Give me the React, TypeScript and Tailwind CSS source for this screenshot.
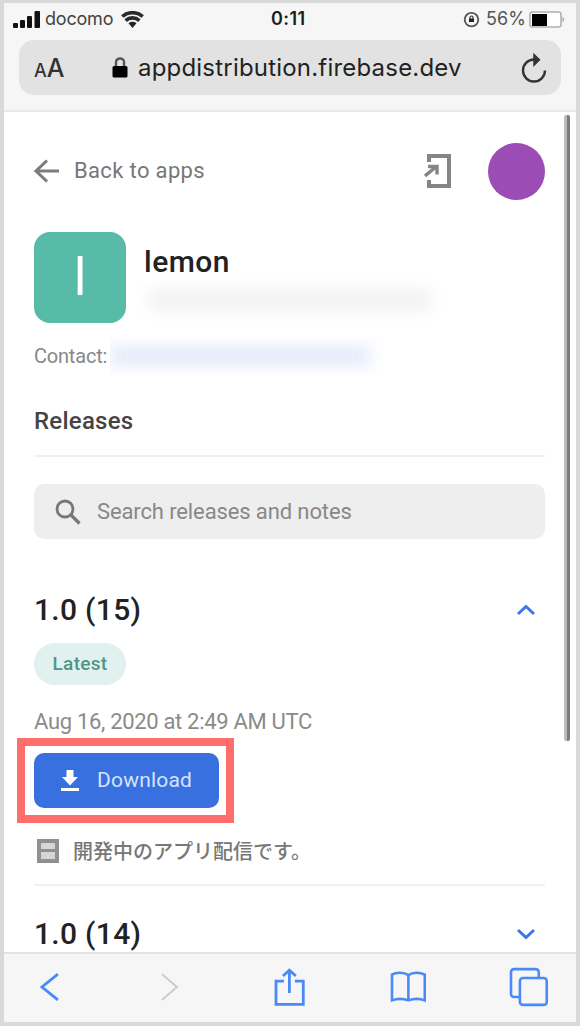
import { useState } from "react";
import type { ReactNode } from "react";

const ROBOTO = "font-['Roboto',sans-serif]";
const INTER = "font-['Inter',sans-serif]";

function StatusBar() {
  return (
    <div className={`relative flex h-[32px] items-center justify-between pl-[9px] pr-[11px] ${INTER}`}>
      <div className="flex items-center">
        <svg width="28" height="17" viewBox="0 0 28 17" className="text-[#111]" fill="currentColor">
          <rect x="0" y="12" width="5" height="5" rx="1" />
          <rect x="7" y="9" width="5" height="8" rx="1" />
          <rect x="14" y="5" width="5" height="12" rx="1" />
          <rect x="21.5" y="0" width="5.5" height="17" rx="1" />
        </svg>
        <span className="ml-[4px] w-[70px] whitespace-nowrap text-[18px] leading-none tracking-[-0.2px] text-[#444]">docomo</span>
        <svg width="23" height="17" viewBox="0 0 23 17" className="ml-[6px]" fill="none" stroke="#2a2a2a" strokeWidth="3.6">
          <path d="M1.3 5.5C7 .4 16 .4 21.700 5.500" />
          <path d="M4.600 9.600c4-3.600 9.800-3.600 13.800 0" />
          <path d="M7.500 12.300c2.200-2 5.800-2 8 0L11.500 17z" fill="#222" stroke="none" />
        </svg>
      </div>
      <span className="absolute left-[267px] text-[18px] font-semibold leading-none tracking-[0.4px] text-[#1c1c1c]">0:11</span>
      <div className="flex items-center">
        <svg width="17" height="17" viewBox="0 0 17 17" fill="none" stroke="#555" strokeWidth="1.8">
          <path d="M4 3.5A6.8 6.8 0 1 0 13 3.5M4 3.5C6.5 1.4 10.5 1.4 13 3.5" />
          <path d="M6 11V7.5h5V11z" fill="#222" stroke="none" />
          <path d="M7 8V6.5a1.5 1.5 0 0 1 3 0V8" stroke="#333" strokeWidth="1.2" />
        </svg>
        <span className="ml-[6px] w-[41px] whitespace-nowrap text-[18px] leading-none tracking-[0.1px] text-[#555]">56%</span>
        <svg width="36" height="17" viewBox="0 0 36 17" className="ml-[2px]">
          <rect x="1" y="1" width="31" height="15" rx="2.5" fill="#fff" stroke="#b0b0b0" strokeWidth="1.6" />
          <rect x="3" y="3" width="15" height="12" fill="#000" />
          <path d="M33.5 5.500c2 1 2 5 0 6z" fill="#aaa" />
        </svg>
      </div>
    </div>
  );
}

function AddressBar() {
  return (
    <div className={`mx-[15px] mt-[5px] flex h-[55px] items-center rounded-[15px] bg-[#e2e2e2] text-[#222] ${INTER}`}>
      <div className="ml-[15px] mt-[2px] flex w-[32px] items-baseline font-medium leading-none text-[#333]">
        <span className="text-[18px]">A</span>
        <span className="text-[25px]">A</span>
      </div>
      <svg width="16" height="21" viewBox="0 0 16 21" className="ml-[46px]">
        <path d="M4 10V5a4 3.500 0 0 1 8 0v5" fill="none" stroke="#555" strokeWidth="2.4" />
        <rect x="0.5" y="9" width="15" height="11.5" rx="1.5" fill="#000" />
      </svg>
      <span className="ml-[10px] w-[326px] whitespace-nowrap text-[24px] leading-none tracking-[0.2px]">appdistribution.firebase.dev</span>
      <svg width="26" height="30" viewBox="0 0 26 30" className="ml-[57px]" fill="none" stroke="#333" strokeWidth="2.4">
        <path d="M13 6.500A11 11 0 1 0 24 17.500" />
        <path d="M13 1.500l5.500 5.300-5.500 5.500z" fill="#333" strokeWidth="1.500" />
      </svg>
    </div>
  );
}

function Release({ name, open, onToggle, children }: { name: string; open: boolean; onToggle: () => void; children?: ReactNode }) {
  return (
    <section>
      <button onClick={onToggle} className="flex h-[40px] w-full items-center justify-between">
        <span className="text-[30px] font-medium leading-none tracking-[0.3px] text-[#222]">{name}</span>
        <svg width="20" height="12" viewBox="0 0 20 12" className="mr-[9px]" fill="none" stroke="#3b78e7" strokeWidth="3">
          <path d={open ? "M2 10l8-7.5L18 10" : "M2 2l8 7.5L18 2"} />
        </svg>
      </button>
      {open && children}
    </section>
  );
}

function TabBar() {
  return (
    <nav className="h-[70px] shrink-0 border-t-2 border-[#e3e3e3] bg-[#f6f6f6]">
      <div className="flex h-[66px] items-center pl-[36px] pr-[27px] text-[#4a8af8]">
        <svg width="20" height="28" viewBox="0 0 20 28" fill="none" stroke="currentColor" strokeWidth="2.8">
          <path d="M18 1L2 14l16 13" />
        </svg>
        <svg width="18" height="28" viewBox="0 0 18 28" className="ml-[101px]" fill="none" stroke="#ccc" strokeWidth="2">
          <path d="M1 1l15 13L1 27" />
        </svg>
        <svg width="31" height="39" viewBox="0 0 31 39" className="ml-[95px]" fill="none" stroke="currentColor" strokeWidth="2.8">
          <path d="M10 13H2v23.500h27.500V13H21M15.500 25V2M9 8l6.500-6L22 8" />
        </svg>
        <svg width="37" height="32" viewBox="0 0 37 32" className="ml-[85px]" fill="none" stroke="currentColor" strokeWidth="2.6">
          <path d="M18.500 4C14 1 6 1 2 3.500v26c5-2 11-2 16.500 0 5.500-2 11.500-2 16.500 0v-26C30 1 23 1 18.500 4zv25.500" />
        </svg>
        <svg width="40" height="40" viewBox="0 0 40 40" className="ml-[83px]" fill="none" stroke="currentColor" strokeWidth="2.600">
          <rect x="11" y="11" width="27" height="27" rx="3" />
          <path d="M11 30H5a3 3 0 0 1-3-3V5a3 3 0 0 1 3-3h22a3 3 0 0 1 3 3v6" />
        </svg>
      </div>
    </nav>
  );
}

export default function App() {
  const [openRelease, setOpenRelease] = useState("1.0 (15)");
  const toggle = (name: string) => setOpenRelease(openRelease === name ? "" : name);

  return (
    <div className="flex h-[1026px] w-[580px] flex-col overflow-hidden border-b-[4px] border-l-[4px] border-r-[4px] border-t-[3px] border-[#d9d9d9] bg-white">
      <header className="h-[109px] shrink-0 border-b-2 border-[#e8e8e8] bg-[#f6f6f6]">
        <StatusBar />
        <AddressBar />
      </header>

      <main className={`relative min-h-0 flex-1 overflow-hidden pl-[30px] pr-[31px] ${ROBOTO}`}>
        <div className="absolute right-[6px] top-[3px] h-[626px] w-[6px] rounded-[2px] border-l-[3px] border-[#bdbdbd] bg-[#7b7b7b]" />

        <div className="mt-[31px] flex h-[56px] items-center">
          <svg width="25" height="24" viewBox="0 0 25 24" fill="none" stroke="#7c7c7c" strokeWidth="3">
            <path d="M25 12H2M13 1.500L2 12l11 10.500" />
          </svg>
          <span className="ml-[15px] whitespace-nowrap text-[22px] leading-none tracking-[0.35px] text-[#777]">Back to apps</span>
          <svg width="28" height="36" viewBox="0 0 28 36" className="ml-auto mr-[36px]" fill="none" stroke="#858585" strokeWidth="4">
            <path d="M5 9V3h20v30H5v-6" />
            <path d="M1 23L13 13M4 13.500h9v8" strokeWidth="3.400" />
          </svg>
          <div className="h-[57px] w-[57px] rounded-full bg-[#9c4db5]" />
        </div>

        <div className="mt-[33px] flex h-[91px]">
          <div className="flex w-[92px] items-center justify-center rounded-[16px] bg-[#57bba7] text-[52px] leading-none text-white">l</div>
          <div className="ml-[18px]">
            <h1 className="mt-[14px] text-[30px] font-medium leading-[32px] tracking-[0.5px] text-[#222]">lemon</h1>
            <div className="ml-[4px] mt-[12px] h-[20px] w-[284px] rounded-full bg-[#f0f0f0] blur-[8px]" />
          </div>
        </div>

        <div className="mt-[14px] flex h-[37px] items-center">
          <span className="w-[76px] whitespace-nowrap text-[20px] leading-none tracking-[-0.2px] text-[#888]">Contact:</span>
          <div className="flex h-full w-[280px] items-center overflow-hidden">
            <div className="h-[20px] w-[260px] bg-[#e2eafa] blur-[8px]" />
          </div>
        </div>

        <h2 className="mt-[34px] text-[24px] font-medium leading-[26px] tracking-[0.25px] text-[#444]">Releases</h2>
        <div className="mt-[21px] h-[2px] bg-[#f1f1f1]" />

        <div className="mt-[27px] flex h-[55px] items-center rounded-[10px] bg-[#eeeeee]">
          <svg width="26" height="26" viewBox="0 0 26 26" className="ml-[21px]" fill="none" stroke="#777">
            <circle cx="10" cy="10" r="8" strokeWidth="2.800" />
            <path d="M16 16l8.500 8.500" strokeWidth="3.200" />
          </svg>
          <input
            placeholder="Search releases and notes"
            className="ml-[16px] w-[400px] bg-transparent text-[22px] tracking-[-0.120px] outline-none placeholder:text-[#888]"
          />
        </div>

        <div className="mt-[51px]">
          <Release name="1.0 (15)" open={openRelease === "1.0 (15)"} onToggle={() => toggle("1.0 (15)")}>
            <div className="mt-[13px] flex h-[42px] w-[92px] items-center justify-center rounded-full bg-[#e1f1ef] text-[19px] font-medium tracking-[0.3px] text-[#4f9688]">
              Latest
            </div>
            <div className="mt-[25px] whitespace-nowrap text-[22px] leading-[24px] tracking-[-0.320px] text-[#8a8a8a]">Aug 16, 2020 at 2:49 AM UTC</div>
            <div className="relative mt-[19px] h-[55px] w-[185px]">
              <button className="flex h-full w-full items-center rounded-[10px] bg-[#3870df] text-[#d5e3ff]">
                <svg width="18" height="21" viewBox="0 0 18 21" className="ml-[27px]" fill="#fff">
                  <path d="M5.500 0h7v7h4.500l-8 8.500L1 7h4.500zM0 18h18v3H0z" />
                </svg>
                <span className="ml-[18px] text-[21px] leading-none tracking-[0.200px]">Download</span>
              </button>
              <div className="pointer-events-none absolute -left-[17px] -top-[15px] h-[85px] w-[217px] border-8 border-[#ff6e6c]" />
            </div>
            <div className="mt-[31px] flex h-[24px] items-center font-['Noto_Sans_CJK_JP',sans-serif]">
              <svg width="22" height="24" viewBox="0 0 22 24" className="ml-[3px]" fill="none" stroke="#909090" strokeWidth="4">
                <rect x="2" y="2" width="18" height="20" fill="#d6d6d6" />
                <path d="M4 11.500h14" strokeWidth="3" />
              </svg>
              <span className="ml-[14px] whitespace-nowrap text-[20px] font-medium leading-[24px] text-[#777]">開発中のアプリ配信です。</span>
            </div>
            <div className="mb-[28px] mt-[21px] h-[2px] bg-[#f1f1f1]" />
          </Release>
          <Release name="1.0 (14)" open={openRelease === "1.0 (14)"} onToggle={() => toggle("1.0 (14)")} />
        </div>
      </main>

      <TabBar />
    </div>
  );
}
